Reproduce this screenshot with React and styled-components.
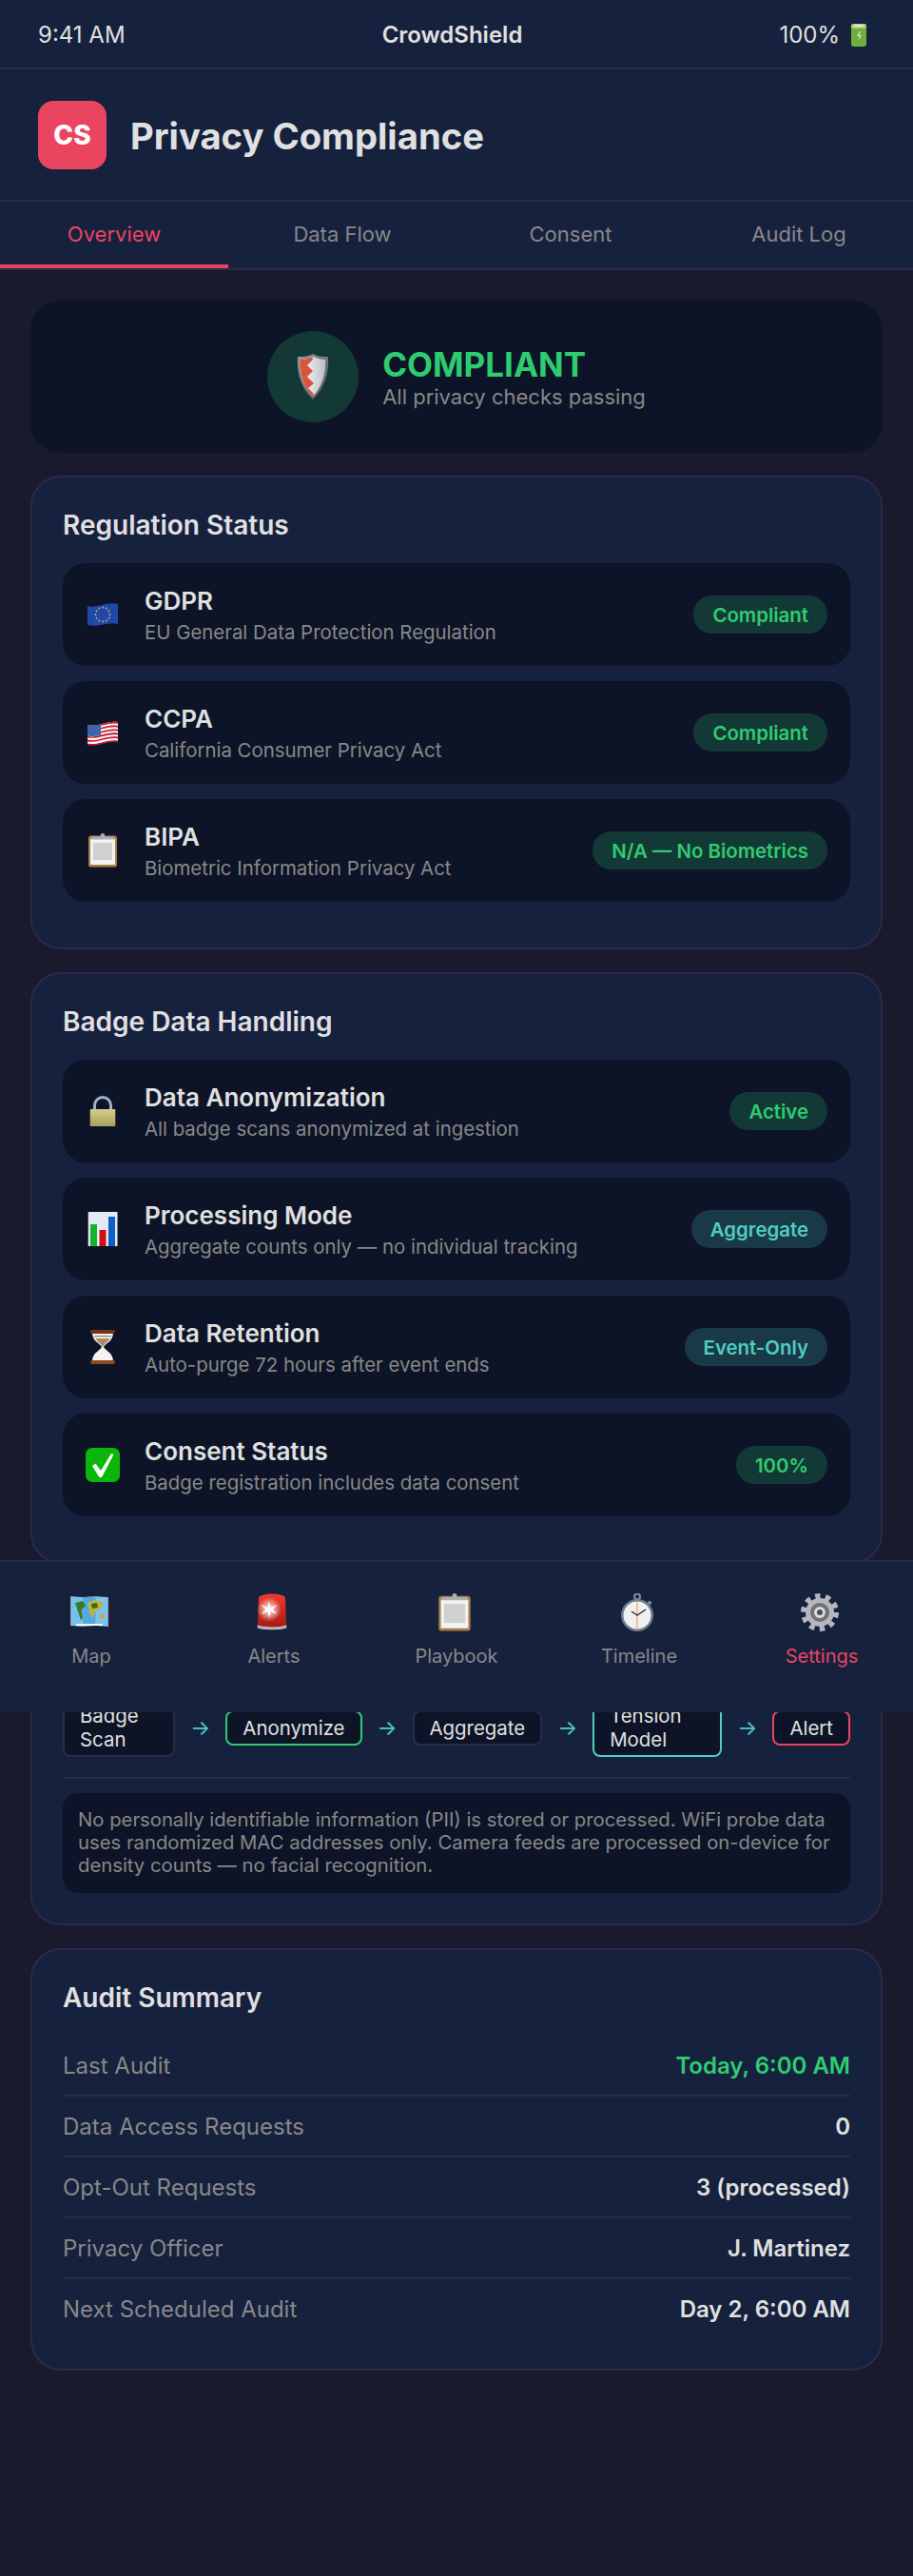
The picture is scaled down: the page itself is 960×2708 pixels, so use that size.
import React from 'react'
import styled, { createGlobalStyle } from 'styled-components'

const GlobalStyle = createGlobalStyle`
    * { box-sizing: border-box; }
    body {
        margin: 0;
        background: #1a1a2e;
        font-family: Inter, "Noto Sans", sans-serif;
        color: #e0e0e0;
    }
`;

const Page = styled.div`
    position: relative;
    width: 960px;
    min-height: 2708px;
    background: #1a1a2e;
`;

const StatusBar = styled.div`
    display: flex;
    justify-content: space-between;
    align-items: center;
    height: 73px;
    padding: 2px 40px 0;
    background: #16213e;
    border-bottom: 2px solid #2a2a4a;
    font-size: 24px;
`;

const StatusTitle = styled.span`
    font-weight: 600;
`;

const Battery = styled.span`
    display: flex;
    align-items: center;
    gap: 7px;
`;

const Header = styled.div`
    display: flex;
    align-items: center;
    gap: 25px;
    height: 139px;
    padding: 0 40px;
    background: #16213e;
    border-bottom: 2px solid #2a2a4a;
`;

const Logo = styled.div`
    display: flex;
    align-items: center;
    justify-content: center;
    width: 72px;
    height: 72px;
    border-radius: 16px;
    background: #e94560;
    color: #fff;
    font-size: 28px;
    font-weight: 800;
`;

const PageTitle = styled.h1`
    margin: 2px 0 0;
    font-size: 38.2px;
    font-weight: 700;
    color: #e0e0e0;
`;

const Tabs = styled.div`
    display: flex;
    background: #16213e;
    border-bottom: 2px solid #2a2a4a;
`;

const Tab = styled.div`
    flex: 1;
    height: 70px;
    display: flex;
    align-items: center;
    justify-content: center;
    padding-top: 2px;
    font-size: 22px;
    color: ${p => p.$active ? '#e94560' : '#888'};
    border-bottom: 4px solid ${p => p.$active ? '#e94560' : 'transparent'};
`;

const Content = styled.div`
    display: flex;
    flex-direction: column;
    gap: 24px;
    padding: 32px 32px 160px;
`;

const Hero = styled.div`
    display: flex;
    align-items: center;
    justify-content: center;
    gap: 25px;
    padding: 32px;
    border-radius: 32px;
    background: #0d1427;
`;

const HeroCircle = styled.div`
    display: flex;
    align-items: center;
    justify-content: center;
    width: 96px;
    height: 96px;
    border-radius: 50%;
    background: rgba(46, 204, 113, 0.2);
`;

const HeroTitle = styled.div`
    font-size: 35px;
    font-weight: 700;
    color: #2ecc71;
`;

const HeroSub = styled.div`
    font-size: 22px;
    color: #888;
`;

const Card = styled.section`
    padding: 32px;
    border: 2px solid #2a2a4a;
    border-radius: 32px;
    background: #16213e;
`;

const CardTitle = styled.h2`
    margin: 0 0 23px;
    padding-top: 1px;
    font-size: 28px;
    line-height: 34px;
    font-weight: 600;
    color: #e0e0e0;
`;

const Row = styled.div`
    display: flex;
    align-items: center;
    gap: 26px;
    height: 108px;
    margin-bottom: 16px;
    padding: 0 24px;
    border-radius: 24px;
    background: #0d1427;
`;

const RowIcon = styled.div`
    display: flex;
    flex: none;
    width: 36px;
    height: 36px;
`;

const RowInfo = styled.div`
    flex: 1;
    min-width: 0;
    padding-top: 1px;
`;

const RowName = styled.div`
    font-size: 26px;
    font-weight: 600;
    color: #e0e0e0;
`;

const RowSub = styled.div`
    margin-top: 5px;
    font-size: 20.4px;
    color: #888;
`;

const Badge = styled.span`
    flex: none;
    padding: 0 20px;
    height: 40px;
    line-height: 41px;
    border-radius: 20px;
    font-size: 20.4px;
    font-weight: 600;
    color: ${p => p.$tone === 'teal' ? '#4ecdc4' : '#2ecc71'};
    background: ${p => p.$tone === 'teal' ? 'rgba(78, 205, 196, 0.2)' : 'rgba(46, 204, 113, 0.2)'};
`;

const FlowRow = styled.div`
    display: flex;
    align-items: center;
    justify-content: space-between;
    gap: 16px;
    padding: 25px 0 21px;
`;

const FlowStep = styled.div`
    padding: 4px 16px;
    border: 2px solid ${p => p.$color || '#2a2a4a'};
    border-radius: 8px;
    background: #0d1427;
    font-size: 20.4px;
    color: #e0e0e0;
`;

const FlowArrow = styled.span`
    flex: none;
    font-size: 22px;
    color: #4ecdc4;
`;

const Divider = styled.div`
    height: 2px;
    margin-bottom: 15px;
    background: #2a2a4a;
`;

const Note = styled.div`
    padding: 16px;
    border-radius: 16px;
    background: #0d1427;
    font-size: 20.3px;
    line-height: 24.2px;
    color: #888;
`;

const AuditRow = styled.div`
    display: flex;
    align-items: center;
    justify-content: space-between;
    height: ${p => p.$last ? 62 : 64}px;
    padding-top: 2px;
    font-size: 24px;
    border-bottom: ${p => p.$last ? 'none' : '2px solid #2a2a4a'};
`;

const AuditLabel = styled.span`
    color: #888;
`;

const AuditValue = styled.span`
    font-weight: 600;
    color: ${p => p.$good ? '#2ecc71' : '#e0e0e0'};
`;

const BottomNav = styled.nav`
    position: absolute;
    top: 1640px;
    left: 0;
    right: 0;
    display: flex;
    height: 160px;
    padding-top: 33px;
    background: #16213e;
    border-top: 2px solid #2a2a4a;
`;

const NavItem = styled.div`
    flex: 1;
    display: flex;
    flex-direction: column;
    align-items: center;
    gap: 14px;
    font-size: 20px;
    color: ${p => p.$active ? '#e94560' : '#888'};
`;

const NavIcon = styled.div`
    display: flex;
    justify-content: center;
    width: 40px;
    height: 40px;
    margin-left: -4px;
`;

const BatteryIcon = () => (
    <svg width="30" height="26" viewBox="0 0 30 26">
        <rect x="5" y="1" width="16" height="24" rx="3" fill="#6fae3e" />
        <rect x="5" y="1" width="16" height="5" rx="2.5" fill="#a8d080" />
        <rect x="8" y="2" width="10" height="2" rx="1" fill="#dcecc8" />
        <path d="M14 9l-3 5h3l-2 5 4-6h-3l2-4z" fill="#e4f2d4" />
    </svg>
);

const ShieldIcon = () => (
    <svg width="48" height="48" viewBox="0 0 48 48">
        <defs>
            <linearGradient id="shieldRim" x1="0" y1="0" x2="1" y2="1">
                <stop offset="0" stopColor="#9a9a9a" />
                <stop offset="1" stopColor="#555" />
            </linearGradient>
            <linearGradient id="shieldFace" x1="0" y1="0" x2="1" y2="0">
                <stop offset="0" stopColor="#fff" />
                <stop offset="1" stopColor="#b9bdc4" />
            </linearGradient>
        </defs>
        <path d="M24 0c5 3 11 3 16 3 1 17-3 32-16 45C11 35 7 20 8 3c5 0 11 0 16-3z" fill="url(#shieldRim)" />
        <path d="M24 3c5 2 9 3 13 3 1 14-3 28-13 39C14 34 10 20 11 6c4 0 8-1 13-3z" fill="url(#shieldFace)" />
        <path d="M24 3c-5 2-9 3-13 3-1 14 3 28 13 39l1-3-6-6 6-5-7-7 6-6-6-6 6-6-1-3z" fill="#d9553a" />
    </svg>
);

const EuFlag = () => (
    <svg width="36" height="36" viewBox="0 0 36 36">
        <path d="M2 9c10 3 20-5 32-2v21c-11-3-21 4-32 1z" fill="#2047aa" />
        {[...Array(12)].map((_, i) => (
            <circle
                key={i}
                cx={18 + 7.5 * Math.cos(i * Math.PI / 6)}
                cy={18 + 7.5 * Math.sin(i * Math.PI / 6)}
                r="0.9"
                fill="#d8b84a"
            />
        ))}
    </svg>
);

const UsFlag = () => (
    <svg width="36" height="36" viewBox="0 0 36 36">
        <path d="M2 10c10 3 20-5 32-3v21c-11-3-21 4-32 2z" fill="#f4f4f4" />
        {[0, 1, 2, 3, 4, 5].map(i => (
            <path key={i} d={`M2 ${10 + i * 3.9}c10 3 20-5 32-3v1.8c-11-2-21 5-32 3z`} fill="#c8182c" />
        ))}
        <path d="M2 10c5 1.5 10 .5 14-.5V21c-5 1-10 1.5-14 .5z" fill="#3d64ad" />
    </svg>
);

const Clipboard = ({ size }) => (
    <svg width={size} height={size} viewBox="0 0 36 36">
        <rect x="3" y="2.5" width="30" height="33" rx="2.5" fill="#a77f45" />
        <rect x="5" y="6" width="26" height="27" fill="#f2f2f2" />
        <rect x="8" y="10" width="20" height="18" fill="#d0d0d0" />
        <rect x="6" y="3.500" width="24" height="3" rx="1" fill="#a9aeb4" />
        <circle cx="18" cy="2.2" r="2.2" fill="#a9aeb4" />
    </svg>
);

const LockIcon = () => (
    <svg width="36" height="36" viewBox="0 0 36 36">
        <defs>
            <linearGradient id="lockBody" x1="0" y1="0" x2="0" y2="1">
                <stop offset="0" stopColor="#d6cd8a" />
                <stop offset="1" stopColor="#a89f5f" />
            </linearGradient>
        </defs>
        <path d="M9.5 17V12a8.500 8.500 0 0 1 17 0v5" fill="none" stroke="#9fb1c8" strokeWidth="3" />
        <rect x="4.7" y="16" width="26.6" height="18" rx="1" fill="url(#lockBody)" />
    </svg>
);

const ChartIcon = () => (
    <svg width="36" height="36" viewBox="0 0 36 36">
        <rect x="2.7" width="30.8" height="36" fill="#e4eaf2" />
        <rect x="5" y="13" width="7" height="23" fill="#12b52c" />
        <rect x="14.5" y="19" width="7" height="17" fill="#d30f0f" />
        <rect x="24" y="5" width="7" height="31" fill="#0d5fc8" />
    </svg>
);

const HourglassIcon = () => (
    <svg width="36" height="36" viewBox="0 0 36 36">
        <path d="M7 3c0 9 8 11 10 15-2 4-10 6-10 15h22c0-9-8-11-10-15 2-4 10-6 10-15z" fill="#f6f3ee" />
        <path d="M9 6h18c-1 5-7 8-9 12-2-4-8-7-9-12z" fill="#a98a6c" />
        <rect x="10" y="7.500" width="16" height="1.500" fill="#fff" />
        <rect x="5" width="26" height="4" rx="2" fill="#6e3517" />
        <rect x="5" y="32" width="26" height="4" rx="2" fill="#8a4a22" />
    </svg>
);

const CheckIcon = () => (
    <svg width="36" height="36" viewBox="0 0 36 36">
        <rect width="36" height="36" rx="7" fill="#0ab60a" />
        <path d="M7 19l3.500-2.500L16 24 27 6l2.500 1L17 31h-2.500z" fill="#fff" />
    </svg>
);

const MapIcon = () => (
    <svg width="40" height="40" viewBox="0 0 40 40">
        <path d="M0 3l13 1 13-1 14 1v31l-14-1-13 1-13-1z" fill="#b59a8a" />
        <rect x="1" y="4" width="12.500" height="30" fill="#6fc3f0" />
        <rect x="13.500" y="4" width="13" height="30" fill="#4ea9e6" />
        <rect x="26.500" y="4" width="12.500" height="30" fill="#75c6f2" />
        <path d="M5 10l8-2 3 5-4 4 1 9-2 2-3-9z" fill="#3f7a28" />
        <path d="M18 10l8-3 9 3-4 7-5 2-3 8-3-8z" fill="#c3b13a" />
        <path d="M22 11l6-1 1 5-6 1z" fill="#2f6d25" />
        <circle cx="33" cy="24" r="2.500" fill="#e99a3a" />
        <rect x="6" y="32" width="28" height="2" fill="#f3f7fa" />
    </svg>
);

const SirenIcon = () => (
    <svg width="40" height="40" viewBox="0 0 40 40">
        <defs>
            <linearGradient id="sirenDome" x1="0" y1="0" x2="0" y2="1">
                <stop offset="0" stopColor="#ef3b2a" />
                <stop offset="1" stopColor="#a81812" />
            </linearGradient>
            <radialGradient id="sirenFlash">
                <stop offset="0" stopColor="#fff" />
                <stop offset="1" stopColor="#fff" stopOpacity="0" />
            </radialGradient>
        </defs>
        <path d="M5 33l-.500 3c2 3 29 3 31 0l-.500-3z" fill="#b5b5b5" />
        <path d="M6 5c0-6 28-6 28 0l1 28c-3 3-27 3-30 0z" fill="url(#sirenDome)" />
        <circle cx="17" cy="17" r="13" fill="url(#sirenFlash)" />
        <path d="M17 8l1.500 7 7-3-5 5 5 5-7-3-1.500 7-1.500-7-7 3 5-5-5-5 7 3z" fill="#fff" />
    </svg>
);

const StopwatchIcon = () => (
    <svg width="40" height="40" viewBox="0 0 40 40">
        <circle cx="20" cy="3.500" r="3" fill="none" stroke="#8a8f96" strokeWidth="2" />
        <circle cx="33" cy="10" r="2" fill="#8a8f96" />
        <circle cx="20" cy="23" r="17" fill="#6d7b8a" />
        <circle cx="20" cy="23" r="14.500" fill="#f0f0f0" />
        <path d="M20 9v28" stroke="#f0b090" strokeWidth="1.500" />
        <path d="M14 19l6 4 9-6" fill="none" stroke="#222" strokeWidth="1.200" />
    </svg>
);

const GearIcon = () => (
    <svg width="40" height="40" viewBox="0 0 40 40">
        <circle cx="20" cy="20" r="17" fill="none" stroke="#b4b7bc" strokeWidth="6" strokeDasharray="5.340 5.340" />
        <circle cx="20" cy="20" r="15" fill="#b4b7bc" />
        <circle cx="20" cy="20" r="10" fill="#6e7176" />
        <circle cx="20" cy="20" r="6" fill="#d9dbde" />
        <circle cx="20" cy="20" r="3" fill="#4b4d52" />
    </svg>
);

const regulations = [
    { icon: <EuFlag />, name: 'GDPR', sub: 'EU General Data Protection Regulation', badge: 'Compliant' },
    { icon: <UsFlag />, name: 'CCPA', sub: 'California Consumer Privacy Act', badge: 'Compliant' },
    { icon: <Clipboard size={36} />, name: 'BIPA', sub: 'Biometric Information Privacy Act', badge: 'N/A — No Biometrics' },
];

const handling = [
    { icon: <LockIcon />, name: 'Data Anonymization', sub: 'All badge scans anonymized at ingestion', badge: 'Active' },
    { icon: <ChartIcon />, name: 'Processing Mode', sub: 'Aggregate counts only — no individual tracking', badge: 'Aggregate', tone: 'teal' },
    { icon: <HourglassIcon />, name: 'Data Retention', sub: 'Auto-purge 72 hours after event ends', badge: 'Event-Only', tone: 'teal' },
    { icon: <CheckIcon />, name: 'Consent Status', sub: 'Badge registration includes data consent', badge: '100%' },
];

const flow = [
    { label: 'Badge Scan' },
    { label: 'Anonymize', color: '#2ecc71' },
    { label: 'Aggregate' },
    { label: 'Tension Model', color: '#4ecdc4' },
    { label: 'Alert', color: '#e94560' },
];

const audit = [
    { label: 'Last Audit', value: 'Today, 6:00 AM', good: true },
    { label: 'Data Access Requests', value: '0' },
    { label: 'Opt-Out Requests', value: '3 (processed)' },
    { label: 'Privacy Officer', value: 'J. Martinez' },
    { label: 'Next Scheduled Audit', value: 'Day 2, 6:00 AM' },
];

const navItems = [
    { label: 'Map', icon: <MapIcon /> },
    { label: 'Alerts', icon: <SirenIcon /> },
    { label: 'Playbook', icon: <Clipboard size={40} /> },
    { label: 'Timeline', icon: <StopwatchIcon /> },
    { label: 'Settings', icon: <GearIcon />, active: true },
];

const StatusRows = ({ items }) => items.map(el => (
    <Row key={el.name}>
        <RowIcon>{el.icon}</RowIcon>
        <RowInfo>
            <RowName>{el.name}</RowName>
            <RowSub>{el.sub}</RowSub>
        </RowInfo>
        <Badge $tone={el.tone}>{el.badge}</Badge>
    </Row>
));

const App = () => {
    return (
        <Page>
            <GlobalStyle />
            <StatusBar>
                <span>9:41 AM</span>
                <StatusTitle>CrowdShield</StatusTitle>
                <Battery>100% <BatteryIcon /></Battery>
            </StatusBar>
            <Header>
                <Logo>CS</Logo>
                <PageTitle>Privacy Compliance</PageTitle>
            </Header>
            <Tabs>
                <Tab $active>Overview</Tab>
                <Tab>Data Flow</Tab>
                <Tab>Consent</Tab>
                <Tab>Audit Log</Tab>
            </Tabs>
            <Content>
                <Hero>
                    <HeroCircle><ShieldIcon /></HeroCircle>
                    <div>
                        <HeroTitle>COMPLIANT</HeroTitle>
                        <HeroSub>All privacy checks passing</HeroSub>
                    </div>
                </Hero>
                <Card>
                    <CardTitle>Regulation Status</CardTitle>
                    <StatusRows items={regulations} />
                </Card>
                <Card>
                    <CardTitle>Badge Data Handling</CardTitle>
                    <StatusRows items={handling} />
                </Card>
                <Card>
                    <CardTitle>Data Flow</CardTitle>
                    <FlowRow>
                        {flow.map((el, i) => (
                            <React.Fragment key={el.label}>
                                {i > 0 && <FlowArrow>→</FlowArrow>}
                                <FlowStep $color={el.color}>{el.label}</FlowStep>
                            </React.Fragment>
                        ))}
                    </FlowRow>
                    <Divider />
                    <Note>
                        No personally identifiable information (PII) is stored or processed. WiFi probe data uses randomized MAC addresses only. Camera feeds are processed on-device for density counts — no facial recognition.
                    </Note>
                </Card>
                <Card>
                    <CardTitle>Audit Summary</CardTitle>
                    {audit.map((el, i) => (
                        <AuditRow key={el.label} $last={i === audit.length - 1}>
                            <AuditLabel>{el.label}</AuditLabel>
                            <AuditValue $good={el.good}>{el.value}</AuditValue>
                        </AuditRow>
                    ))}
                </Card>
            </Content>
            <BottomNav>
                {navItems.map(el => (
                    <NavItem key={el.label} $active={el.active}>
                        <NavIcon>{el.icon}</NavIcon>
                        {el.label}
                    </NavItem>
                ))}
            </BottomNav>
        </Page>
    )
}

export default App
